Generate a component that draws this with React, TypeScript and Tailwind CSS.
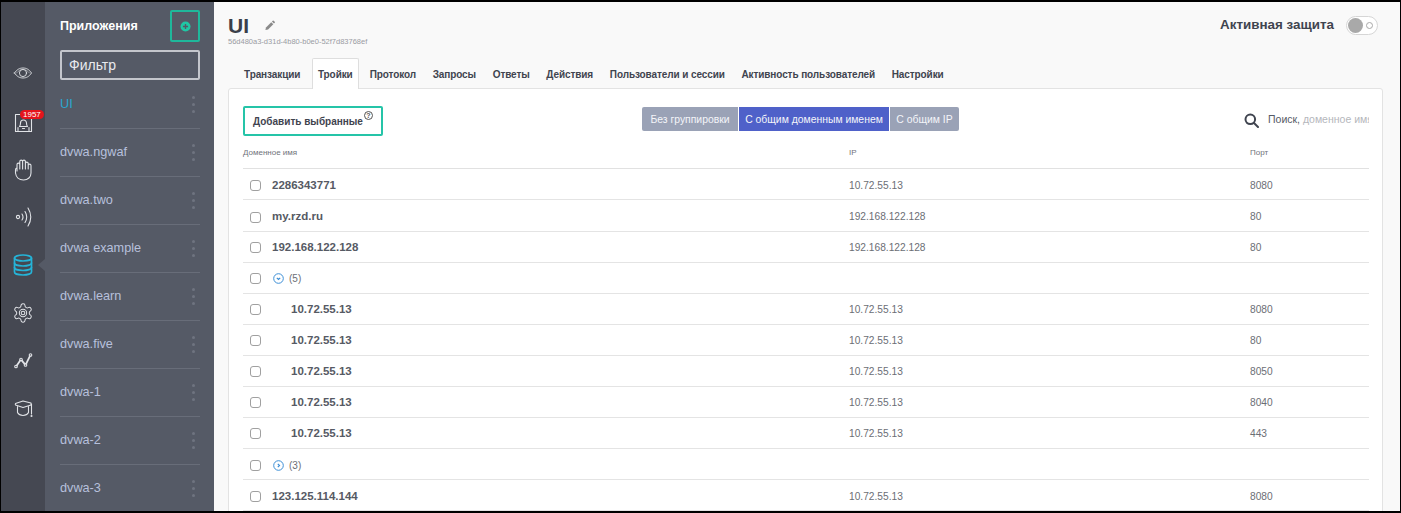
import React from "react";

const F = { fontFamily: '"Liberation Sans", Arial, sans-serif' };

const apps = ["UI", "dvwa.ngwaf", "dvwa.two", "dvwa example", "dvwa.learn", "dvwa.five", "dvwa-1", "dvwa-2", "dvwa-3"];
const tabs = ["Транзакции", "Тройки", "Протокол", "Запросы", "Ответы", "Действия", "Пользователи и сессии", "Активность пользователей", "Настройки"];

type Row = { d?: string; ip?: string; port?: string; indent?: boolean; group?: "open" | "closed"; n?: number };
const rows: Row[] = [
  { d: "2286343771", ip: "10.72.55.13", port: "8080" },
  { d: "my.rzd.ru", ip: "192.168.122.128", port: "80" },
  { d: "192.168.122.128", ip: "192.168.122.128", port: "80" },
  { group: "open", n: 5 },
  { d: "10.72.55.13", ip: "10.72.55.13", port: "8080", indent: true },
  { d: "10.72.55.13", ip: "10.72.55.13", port: "80", indent: true },
  { d: "10.72.55.13", ip: "10.72.55.13", port: "8050", indent: true },
  { d: "10.72.55.13", ip: "10.72.55.13", port: "8040", indent: true },
  { d: "10.72.55.13", ip: "10.72.55.13", port: "443", indent: true },
  { group: "closed", n: 3 },
  { d: "123.125.114.144", ip: "10.72.55.13", port: "8080" },
];

function RailIcon({ children, active }: { children: React.ReactNode; active?: boolean }) {
  return (
    <div className={"relative flex h-12 w-full items-center justify-center " + (active ? "text-[#25b4d8]" : "text-[#e1e3e7]")}>
      <svg width="24" height="24" viewBox="0 0 24 24" fill="none" stroke="currentColor" strokeWidth="1.100" strokeLinecap="round" strokeLinejoin="round">
        {children}
      </svg>
      {active && <div className="absolute right-0 top-[18px] h-0 w-0 border-y-[6px] border-r-[7px] border-y-transparent border-r-[#555a66]" />}
    </div>
  );
}

function Kebab() {
  return (
    <div className="flex flex-col gap-[4px]">
      <span className="h-[3px] w-[3px] rounded-full bg-[#6f7480]" />
      <span className="h-[3px] w-[3px] rounded-full bg-[#6f7480]" />
      <span className="h-[3px] w-[3px] rounded-full bg-[#6f7480]" />
    </div>
  );
}

function Check() {
  return <span className="h-[11px] w-[11px] shrink-0 rounded-[3px] border-[1.5px] border-[#a0a0a0] bg-white" />;
}

export default function App() {
  return (
    <div style={F} className="flex h-[513px] w-[1401px] overflow-hidden border-x border-t-2 border-b-2 border-black bg-[#f9f9f9]">
      {/* rail */}
      <div className="flex w-[44px] shrink-0 flex-col bg-[#454852] pt-[47px]">
        <RailIcon>
          <g strokeWidth="0.900">
            <path d="M3.500 12C6 8.300 8.700 7 12 7s6 1.300 8.500 5c-2.500 3.700-5.200 5-8.500 5s-6-1.300-8.500-5z" />
            <circle cx="12" cy="12" r="3.600" />
          </g>
          <path d="M5.500 12c2-2.400 4-3.500 6.500-3.500s4.500 1.100 6.500 3.500" strokeWidth="0.500" />
        </RailIcon>
        <div className="relative">
          <RailIcon>
            <path d="M4.500 5.500h16v17h-16z" />
            <path d="M8.500 17.500c1-.8 1-2 1-3.500a3 3 0 0 1 6 0c0 1.500 0 2.700 1 3.500z" />
            <path d="M11.500 19.500h2" />
            <path d="M7 21.500v-3M18 21.500v-3" />
          </RailIcon>
          <span className="absolute left-[19px] top-[13px] rounded-[5px] bg-[#e5141c] px-[3px] text-[8px] leading-[9px] text-white">1957</span>
        </div>
        <RailIcon>
          <path d="M6 14V7.500a1.400 1.400 0 0 1 2.800 0V12M8.800 12V4.500a1.400 1.400 0 0 1 2.800 0V12M11.600 12V4.500a1.400 1.400 0 0 1 2.800 0V12M14.400 12V6.500a1.400 1.400 0 0 1 2.800 0V12M17.200 12V8.500a1.400 1.400 0 0 1 2.800 0V16c0 4-3 7-7.500 7S5 20 4.500 16v-3c0-2 1.500-2 1.500-1" />
        </RailIcon>
        <RailIcon>
          <circle cx="7" cy="12" r="1.600" />
          <path d="M11 9c1.300 2 1.300 4.200 0 6M14 6.500c2.200 3.500 2.200 7.500 0 11M17 3c3.400 5.500 3.400 12.500 0 18" />
        </RailIcon>
        <RailIcon active>
          <g strokeWidth="1.700">
            <ellipse cx="12" cy="5" rx="8.500" ry="3" />
            <path d="M3.500 5v14c0 1.700 3.800 3 8.500 3s8.500-1.300 8.500-3V5" />
            <path d="M3.500 10c0 1.700 3.800 3 8.500 3s8.500-1.300 8.500-3M3.500 14.500c0 1.700 3.800 3 8.500 3s8.500-1.300 8.500-3" />
          </g>
        </RailIcon>
        <RailIcon>
          <g transform="translate(1 1) scale(.917)">
            <path d="M12.220 2h-.44a2 2 0 0 0-2 2v.18a2 2 0 0 1-1 1.730l-.43.25a2 2 0 0 1-2 0l-.15-.08a2 2 0 0 0-2.730.73l-.22.38a2 2 0 0 0 .73 2.730l.15.1a2 2 0 0 1 1 1.720v.51a2 2 0 0 1-1 1.740l-.15.09a2 2 0 0 0-.73 2.730l.22.38a2 2 0 0 0 2.730.73l.15-.08a2 2 0 0 1 2 0l.43.25a2 2 0 0 1 1 1.730V20a2 2 0 0 0 2 2h.44a2 2 0 0 0 2-2v-.18a2 2 0 0 1 1-1.730l.43-.25a2 2 0 0 1 2 0l.15.08a2 2 0 0 0 2.730-.73l.22-.39a2 2 0 0 0-.73-2.730l-.15-.08a2 2 0 0 1-1-1.740v-.5a2 2 0 0 1 1-1.740l.15-.09a2 2 0 0 0 .73-2.730l-.22-.38a2 2 0 0 0-2.730-.73l-.15.08a2 2 0 0 1-2 0l-.43-.25a2 2 0 0 1-1-1.730V4a2 2 0 0 0-2-2z" />
            <circle cx="12" cy="12" r="4" />
            <circle cx="12" cy="12" r="2" />
          </g>
        </RailIcon>
        <RailIcon>
          <circle cx="5" cy="17.500" r="1.300" />
          <circle cx="10" cy="10.500" r="1.300" />
          <circle cx="14.500" cy="16" r="1.300" />
          <circle cx="19.500" cy="6" r="1.300" />
          <path strokeWidth="1.800" d="M5.800 16.400 9.200 11.600M10.900 11.600l2.700 3.300M15.100 14.800l3.800-7.600" />
        </RailIcon>
        <RailIcon>
          <path d="M12 4 4.500 6.500c-.3.500-.3 1 0 1.500l7.500 2.500 8-2.500V6z" />
          <path d="M6.500 9.500v6c1.200 2.200 3.300 3 5.500 3s4.300-.8 5.500-3v-6" />
          <path d="M20.500 7v10" />
          <circle cx="20.500" cy="19" r=".5" />
        </RailIcon>
      </div>

      {/* app list */}
      <div className="flex w-[169px] shrink-0 flex-col bg-[#555a66] pl-[15px] pr-[14px]">
        <div className="flex shrink-0 items-center justify-between pt-[8px]">
          <span className="text-[12.5px] font-bold text-white">Приложения</span>
          <span className="flex h-[32px] w-[30px] items-center justify-center rounded-[2px] border-2 border-[#1fb89b]">
            <svg width="11" height="11" viewBox="0 0 12 12">
              <circle cx="6" cy="6" r="5.500" fill="#1fc8a5" />
              <path d="M6 3.200v5.600M3.200 6h5.600" stroke="#555a66" strokeWidth="1.500" />
            </svg>
          </span>
        </div>
        <div className="mb-[1px] mt-[8px] flex h-[30px] shrink-0 items-center rounded-[2px] border-2 border-[#c4c6cc] pl-[7px] text-[14px] text-[#e9eaee]">Фильтр</div>
        <div className="flex shrink-0 flex-col">
          {apps.map((a, i) => (
            <div key={a} className="flex h-[48px] shrink-0 items-center justify-between border-b border-[#686d79] pr-[5px]">
              <span className={"text-[12.700px] " + (i === 0 ? "text-[#2aa7d1]" : "text-[#b7c0dc]")}>{a}</span>
              <Kebab />
            </div>
          ))}
        </div>
      </div>

      {/* main */}
      <div className="min-w-0 flex-1 pl-[14px] pr-[17px]">
        <div className="flex h-[56px] items-start justify-between">
          <div className="pt-[12px]">
            <div className="flex items-center">
              <span className="text-[21px] font-bold leading-[24px] text-[#3a3f4a]">UI</span>
              <svg className="ml-[16px] mt-[-2px]" width="10" height="11" viewBox="0 0 12 12" fill="#8a8a8a">
                <path d="M0.500 11.500l.7-3.200 6.300-6.300 2.500 2.500-6.300 6.300z" />
                <path d="M8.300 1.200 9.300.3a.8.8 0 0 1 1.100 0l1.300 1.300a.8.8 0 0 1 0 1.100l-1 1z" />
              </svg>
            </div>
            <div className="mt-[-1px] text-[7.500px] leading-[9px] text-[#9a9ca3]">56d480a3-d31d-4b80-b0e0-52f7d83768ef</div>
          </div>
          <div className="flex items-center pt-[13px]">
            <span className="text-[13.400px] font-bold text-[#3f444f]">Активная защита</span>
            <span className="ml-[12px] mr-[5px] flex h-[19px] w-[32px] items-center rounded-full border border-[#d6d6d6] bg-white">
              <span className="ml-[1px] h-[15px] w-[15px] rounded-full bg-[#a9a9a9]" />
              <span className="ml-[3px] h-[7px] w-[7px] rounded-full border-[1.5px] border-[#a9a9a9]" />
            </span>
          </div>
        </div>

        {/* tabs */}
        <div className="relative z-10 flex h-[30px] items-end pl-[16px]">
          {tabs.map((t, i) => (
            <div key={t} className={"flex items-center whitespace-nowrap text-[10px] font-bold tracking-[-0.1px] text-[#3f444f] " + (i === 1 ? "mb-[-1px] ml-[-5px] mr-[11px] h-[31px] rounded-t-[2px] border-x border-t border-[#dedede] bg-white px-[5px] pt-[1px]" : "mr-[16.700px] h-[30px] pt-[2px] last:mr-0")}>
              {t}
            </div>
          ))}
        </div>

        {/* card */}
        <div className="h-[440px] rounded-t-[3px] border border-[#e3e3e3] bg-white pl-[14px] pr-[13px] pt-[17px]">
          <div className="flex h-[30px] items-start">
            <div className="relative flex h-[30px] w-[140px] items-center rounded-[2px] border-2 border-[#25c4a8] pl-[8px] text-[10px] font-bold text-[#3f444f]">
              Добавить выбранные
              <span className="absolute right-[8px] top-[3px] flex h-[9px] w-[9px] items-center justify-center rounded-full border border-[#555] text-[7px] font-bold leading-none text-[#555]">?</span>
            </div>
            <div className="ml-[259px] mt-[1px] flex h-[24px] items-stretch overflow-hidden rounded-[2px] pt-0 text-[10.400px] text-[#f4f5f9]">
              <span className="flex w-[97px] items-center justify-center border-r border-white bg-[#9aa2b6] pt-[1px]">Без группировки</span>
              <span className="flex w-[151px] items-center justify-center border-r border-white bg-[#4f61c9] pt-[1px]">С общим доменным именем</span>
              <span className="flex w-[69px] items-center justify-center bg-[#9aa2b6] pt-[1px]">С общим IP</span>
            </div>
            <div className="ml-auto mt-[6px] flex items-center">
              <svg className="mt-[1px]" width="15" height="15" viewBox="0 0 15 15" fill="none" stroke="#3f444f" strokeWidth="2">
                <circle cx="6.300" cy="6.300" r="4.800" />
                <path d="m10 10 4 4" strokeLinecap="round" />
              </svg>
              <span className="ml-[9px] w-[101px] overflow-hidden whitespace-nowrap text-[10.500px] text-[#555a66]">
                Поиск, <span className="text-[#b5b7bc]">доменное имя</span>
              </span>
            </div>
          </div>

          <div className="flex h-[33px] items-center border-b border-[#e1e1e1] pt-[1px] text-[8px] text-[#70727a]">
            <span className="w-[606px]">Доменное имя</span>
            <span className="w-[401px]">IP</span>
            <span>Порт</span>
          </div>

          {rows.map((r, i) => (
            <div key={i} className={"flex items-center border-b border-[#e4e4e4] text-[10.200px] text-[#6b6e75] " + (i === 1 ? "h-[32px] " : "h-[31px] ") + (i === 0 || i === 1 || i >= 9 ? "pt-[3px]" : "pt-[1px]")}>
              <div className="flex w-[606px] items-center pl-[7px]">
                <Check />
                {r.group ? (
                  <span className="ml-[12px] flex items-center text-[#6b6e75]">
                    <svg width="11" height="11" viewBox="0 0 11 11" fill="none" stroke="#3d8fd6" strokeWidth="1">
                      <circle cx="5.500" cy="5.500" r="4.800" />
                      <path d={r.group === "open" ? "M3.800 4.800 5.500 6.500 7.200 4.800" : "M4.800 3.800 6.500 5.500 4.800 7.200"} strokeWidth="1.200" />
                    </svg>
                    <span className="ml-[5px] text-[10px]">({r.n})</span>
                  </span>
                ) : (
                  <span className={"text-[11.500px] font-bold text-[#565a64] " + (r.indent ? "ml-[30px]" : "ml-[11px]")}>{r.d}</span>
                )}
              </div>
              <span className="w-[401px]">{r.ip}</span>
              <span>{r.port}</span>
            </div>
          ))}
        </div>
      </div>
    </div>
  );
}
